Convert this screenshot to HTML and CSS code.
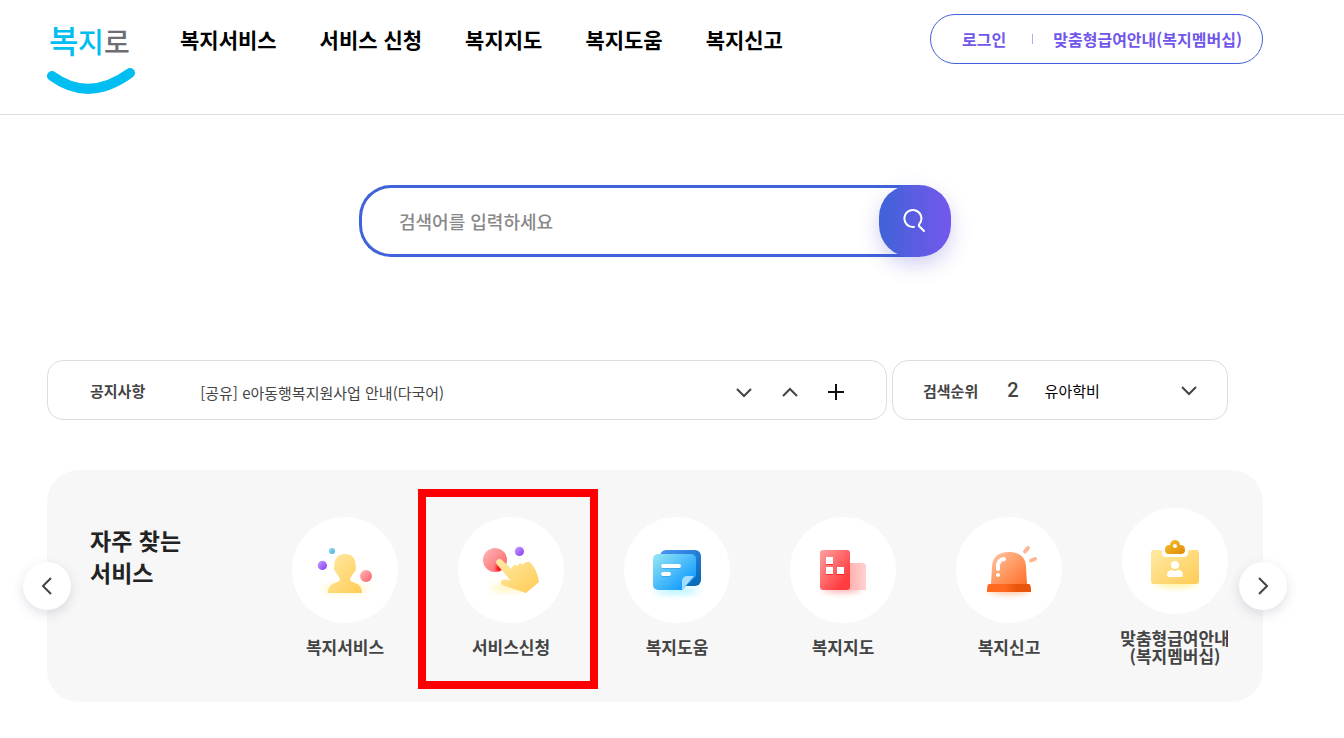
FILE: index.html
```html
<!DOCTYPE html>
<html lang="ko">
<head>
<meta charset="utf-8">
<title>복지로</title>
<link rel="stylesheet" href="styles.css">
</head>
<body>

<header class="header">
  <a href="#" class="logo" aria-label="복지로">
    <svg width="88" height="80" viewBox="0 0 88 80">
      <g class="logo-text">
        <text x="2" y="39" font-size="32" fill="#00bdf2">복</text>
        <text x="31" y="39" font-size="28" fill="#00bdf2">지</text>
        <text x="57" y="39" font-size="28" fill="#6d6e71">로</text>
      </g>
      <path d="M5 62Q42 89 83 59" fill="none" stroke="#00bdf2" stroke-width="10" stroke-linecap="round"/>
    </svg>
  </a>
  <nav class="gnb">
    <a href="#">복지서비스</a>
    <a href="#">서비스 신청</a>
    <a href="#">복지지도</a>
    <a href="#">복지도움</a>
    <a href="#">복지신고</a>
  </nav>
  <div class="member">
    <a href="#">로그인</a>
    <span class="bar"></span>
    <a href="#">맞춤형급여안내(복지멤버십)</a>
  </div>
</header>

<main class="main">
  <form class="search">
    <input type="text" placeholder="검색어를 입력하세요" aria-label="검색어">
    <button type="button" aria-label="검색">
      <svg width="24" height="24" viewBox="0 0 24 24" fill="none" stroke="#fff" stroke-width="2" stroke-linecap="round">
        <path d="M11 18A8.500 8.500 0 1 1 16 15.500L16 17L21 22"/>
      </svg>
    </button>
  </form>

  <div class="info">
    <section class="notice">
      <h2>공지사항</h2>
      <a href="#">[공유] e아동행복지원사업 안내(다국어)</a>
      <div class="ctrl">
        <button type="button" aria-label="다음"><svg width="18" height="18" viewBox="0 0 18 18"><path d="M2 6l7 7 7-7"/></svg></button>
        <button type="button" aria-label="이전"><svg width="18" height="18" viewBox="0 0 18 18"><path d="M2 13l7-7 7 7"/></svg></button>
        <button type="button" aria-label="더보기" class="plus"><svg width="18" height="18" viewBox="0 0 18 18"><path d="M1 9h16M9 1v16"/></svg></button>
      </div>
    </section>
    <section class="rank">
      <h2>검색순위</h2>
      <strong>2</strong>
      <a href="#">유아학비</a>
      <button type="button" aria-label="펼치기"><svg width="18" height="18" viewBox="0 0 18 18"><path d="M2 6l7 7 7-7"/></svg></button>
    </section>
  </div>

  <section class="often">
    <h2>자주 찾는<br>서비스</h2>
    <ul>
      <li><a href="#">
        <svg class="ico" viewBox="0 0 106 106">
          <defs>
            <linearGradient id="gold" x1="0" y1="0" x2="1" y2="1"><stop offset="0" stop-color="#ffeaa4"/><stop offset="1" stop-color="#ffcb55"/></linearGradient>
            <linearGradient id="pink" x1="0" y1="0" x2="1" y2="1"><stop offset="0" stop-color="#ffb9b9"/><stop offset="1" stop-color="#fb5f66"/></linearGradient>
            <linearGradient id="violet" x1="0" y1="0" x2="1" y2="1"><stop offset="0" stop-color="#c8a0ff"/><stop offset="1" stop-color="#8538f5"/></linearGradient>
            <linearGradient id="sky" x1="0" y1="0" x2="1" y2="1"><stop offset="0" stop-color="#93dcf3"/><stop offset="1" stop-color="#43aee0"/></linearGradient>
            <filter id="blur" x="-50%" y="-100%" width="200%" height="300%"><feGaussianBlur stdDeviation="3"/></filter>
          </defs>
          <ellipse cx="53" cy="72" rx="23" ry="4" fill="#fff5bd" filter="url(#blur)"/>
          <circle cx="40" cy="34" r="3" fill="url(#sky)"/>
          <circle cx="30.400" cy="48.400" r="4.600" fill="url(#violet)"/>
          <circle cx="74" cy="59" r="6" fill="url(#pink)"/>
          <path d="M53 37c7 0 11 4 10.700 13 .8 1 .1 4-1.400 5-1.300 3-4.300 5-4.300 8C59 66 70 65 70 76H36C36 65 47 66 48 63c0-3-3-5-4.300-8-1.500-1-2.200-4-1.400-5C42 41 46 37 53 37z" fill="url(#gold)"/>
        </svg>
        <span>복지서비스</span></a></li>
      <li class="marked"><a href="#">
        <svg class="ico" viewBox="0 0 106 106">
          <defs>
            <radialGradient id="press" gradientUnits="userSpaceOnUse" cx="43" cy="51" r="8"><stop offset="0" stop-color="#f00"/><stop offset=".4" stop-color="#ff1a20"/><stop offset="1" stop-color="#ff5a5f" stop-opacity="0"/></radialGradient>
          </defs>
          <ellipse cx="50" cy="71" rx="17" ry="4" fill="#fff5bd" filter="url(#blur)"/>
          <circle cx="37" cy="43" r="12" fill="url(#pink)"/>
          <circle cx="37" cy="43" r="12" fill="url(#press)"/>
          <circle cx="61.400" cy="34.400" r="4.600" fill="url(#violet)"/>
          <path d="M39 47.500c-3-3 1.500-7.500 5-4.500l9.500 9c.5-4 4-5 6-3 1-3 4-3 6-1.500 2-3.500 6-3.500 8-.5C78 52 80 59 81 65L68 76 45.500 68.500C41 67 43 61.500 47 62.500l5.500 1z" fill="url(#gold)"/>
        </svg>
        <span>서비스신청</span></a></li>
      <li><a href="#">
        <svg class="ico" viewBox="0 0 106 106">
          <defs>
            <linearGradient id="navy" x1="0" y1="0" x2="1" y2="1"><stop offset="0" stop-color="#4a95f5"/><stop offset="1" stop-color="#0067b3"/></linearGradient>
            <linearGradient id="note" x1="0" y1="0" x2="1" y2="1"><stop offset="0" stop-color="#98e8f2"/><stop offset=".8" stop-color="#189fff"/></linearGradient>
          </defs>
          <ellipse cx="53" cy="74" rx="22" ry="3" fill="#a8f2ff" filter="url(#blur)"/>
          <rect x="36" y="33" width="41" height="36" rx="6" fill="url(#navy)"/>
          <path d="M34 37H67a5 5 0 0 1 5 5V59L58 73H34a5 5 0 0 1-5-5V42a5 5 0 0 1 5-5z" fill="url(#note)"/>
          <path d="M58 73V64a5 5 0 0 1 5-5H70z" fill="#a5dcff"/>
          <path d="M39 50H55M39 58h6" stroke="#1d86d8" stroke-opacity=".4" stroke-width="4" stroke-linecap="round"/>
          <path d="M39 49H55M39 57h6" stroke="#fff" stroke-width="4" stroke-linecap="round"/>
        </svg>
        <span>복지도움</span></a></li>
      <li><a href="#">
        <svg class="ico" viewBox="0 0 106 106">
          <defs>
            <linearGradient id="red" x1="0" y1="0" x2="1" y2="1"><stop offset="0" stop-color="#ffa0a0"/><stop offset=".8" stop-color="#ff3d40"/></linearGradient>
            <linearGradient id="rose" x1="0" y1="0" x2="1" y2="0"><stop offset="0" stop-color="#ffafaf"/><stop offset="1" stop-color="#ffd2d2"/></linearGradient>
          </defs>
          <ellipse cx="52" cy="72" rx="19" ry="4" fill="#ffb5b5" filter="url(#blur)"/>
          <path d="M59 46H73a3 3 0 0 1 3 3V73H59z" fill="url(#rose)"/>
          <rect x="30" y="33" width="30" height="40" rx="3" fill="url(#red)"/>
          <path d="M36 42h7v6h-7zM36 52h7v6h-7zM47 52h7v6h-7z" fill="#f00" opacity=".6"/>
          <path d="M36 40h7v7h-7zM36 50h7v7h-7zM47 50h7v7h-7z" fill="#fff"/>
        </svg>
        <span>복지지도</span></a></li>
      <li><a href="#">
        <svg class="ico" viewBox="0 0 106 106">
          <defs>
            <linearGradient id="dome" x1="0" y1="0" x2="1" y2="1"><stop offset="0" stop-color="#ffc5a3"/><stop offset="1" stop-color="#ff7028"/></linearGradient>
            <linearGradient id="base" x1="0" y1="0" x2="1" y2="0"><stop offset=".4" stop-color="#ff6a20"/><stop offset=".7" stop-color="#e9540c"/></linearGradient>
          </defs>
          <ellipse cx="53" cy="73" rx="21" ry="4" fill="#ffc09a" filter="url(#blur)"/>
          <path d="M35 67L36 50C36 40 43 35 53 35s17 5 17 15l1 17z" fill="url(#dome)"/>
          <path d="M33 67H73q2 0 2 8H31q0-8 2-8z" fill="url(#base)"/>
          <path d="M69 34.500L72 31M75 43.500L79 42" stroke="#ffb592" stroke-width="4" stroke-linecap="round"/>
          <path d="M42 52V49Q42 43 48 42" fill="none" stroke="#fff" stroke-width="4" stroke-linecap="round"/>
          <circle cx="42" cy="58" r="2" fill="#fff"/>
        </svg>
        <span>복지신고</span></a></li>
      <li><a href="#">
        <svg class="ico" viewBox="0 0 106 106">
          <defs>
            <linearGradient id="clip" x1="0" y1="0" x2="1" y2="1"><stop offset="0" stop-color="#fbc02e"/><stop offset="1" stop-color="#dd8a05"/></linearGradient>
          </defs>
          <ellipse cx="54" cy="76" rx="21" ry="3" fill="#fff08a" filter="url(#blur)"/>
          <path d="M32 42h6q2 0 2 2v1q0 4 4 4H62q4 0 4-4v-1q0-2 2-2h6q3 0 3 3V73q0 3-3 3H32q-3 0-3-3V45q0-3 3-3z" fill="url(#gold)"/>
          <path d="M48 37a5 5 0 0 1 10 0c4 0 5 2 5 5q0 4-4 4H47q-4 0-4-4c0-3 1-5 5-5z" fill="url(#clip)"/>
          <g fill="#fff">
            <circle cx="53" cy="38" r="2"/>
            <circle cx="53" cy="57" r="4"/>
            <path d="M45 67c0-4 3-5 5-5q3 2 6 0c2 0 5 1 5 5q0 2-2 2H47q-2 0-2-2z"/>
          </g>
        </svg>
        <span>맞춤형급여안내<br>(복지멤버십)</span></a></li>
    </ul>
    <button type="button" class="arrow prev" aria-label="이전"><svg width="18" height="18" viewBox="0 0 18 18"><path d="M13 1L5 9l8 8"/></svg></button>
    <button type="button" class="arrow next" aria-label="다음"><svg width="18" height="18" viewBox="0 0 18 18"><path d="M5 1l8 8-8 8"/></svg></button>
  </section>
</main>

</body>
</html>
```
FILE: styles.css
```css
*, *::after { box-sizing: border-box; }
body { margin: 0; background: #fff; color: #000; font-family: "Noto Sans CJK KR", sans-serif; font-size: 15px; }
h2, ul { margin: 0; padding: 0; }
ul { list-style: none; }
a { color: inherit; text-decoration: none; white-space: nowrap; }
button { display: flex; align-items: center; justify-content: center; padding: 0; border: 0; background: none; cursor: pointer; }
button path { fill: none; stroke: #444; stroke-width: 2; }

/* header */
.header { display: flex; align-items: flex-start; min-height: 115px; padding: 14px 81px 20px 47px; border-bottom: 1px solid #ddd; }
.logo { height: 80px; margin-right: 45px; }
.logo svg { display: block; }
.logo-text { font-weight: 500; }
.gnb { display: flex; gap: 43px; font-size: 21px; font-weight: 700; line-height: 50px; }
.member { display: flex; align-items: center; height: 50px; margin-left: auto; padding: 0 20px 0 31px; border: 1px solid #3f63d8; border-radius: 25px; color: #7257eb; font-size: 16px; font-weight: 700; }
.member .bar { width: 1px; height: 10px; margin: 0 20px 0 26px; background: #b5a8f3; }

.main { padding: 70px 81px 36px 47px; }

/* search */
.search { display: flex; width: 592px; max-width: 100%; margin: 0 auto 103px; }
.search input { flex: 1; min-width: 0; height: 72px; margin-right: -40px; padding: 0 60px 0 37px; border: 3px solid #3f63d8; border-right: 0; border-radius: 32px 0 0 32px; outline: 0; font: 500 18px "Noto Sans CJK KR", sans-serif; }
.search input::placeholder { color: #888; opacity: 1; }
.search button { position: relative; width: 72px; height: 72px; border-radius: 32px; background: linear-gradient(90deg, #3f63d8, #7557ec); box-shadow: 0 8px 20px rgba(80, 70, 210, .25); }
.search button path { stroke: #fff; }

/* notice / ranking */
.info { display: grid; grid-template-columns: 5fr 2fr; gap: 5px; margin: 0 35px 50px 0; }
.info h2 { color: #444; font-size: 15px; font-weight: 700; }
.notice, .rank { display: flex; align-items: center; height: 60px; border: 1px solid #ddd; border-radius: 16px; }
.notice { padding: 0 41px 0 42px; }
.notice a { margin-left: 55px; padding-top: 4px; color: #444; font-weight: 400; }
.ctrl { display: flex; gap: 28px; margin-left: auto; padding-top: 4px; }
.plus path { stroke: #111; }
.rank { padding: 0 29px 0 30px; }
.rank strong { margin: 0 26px 0 29px; color: #444; font: 500 20px Roboto, sans-serif; }
.rank button { margin-left: auto; }

/* frequently used */
.often { position: relative; display: flex; min-height: 232px; padding: 0 35px 0 43px; border-radius: 32px; background: #f7f7f7; }
.often h2 { flex: 0 0 172px; padding-top: 54px; color: #222; font-size: 23px; font-weight: 700; line-height: 32px; }
.often ul { display: flex; flex: 1; min-width: 0; overflow: hidden; }
.often li { position: relative; display: flex; flex: 0 0 166px; align-items: center; justify-content: center; }
.often li a { display: flex; flex-direction: column; align-items: center; gap: 15px; color: #444; font-size: 17px; font-weight: 700; line-height: 18px; text-align: center; }
.ico { width: 106px; height: 106px; border-radius: 50%; background: #fff; }
.marked::after { content: ""; position: absolute; top: 19px; left: -10px; width: 180px; height: 200px; border: 8px solid #f00; }
.arrow { position: absolute; top: 50%; width: 48px; height: 48px; margin-top: -24px; border-radius: 50%; background: #fff; box-shadow: 0 4px 12px rgba(60, 70, 110, .16); }
.prev { left: -24px; }
.next { right: -24px; }
```
